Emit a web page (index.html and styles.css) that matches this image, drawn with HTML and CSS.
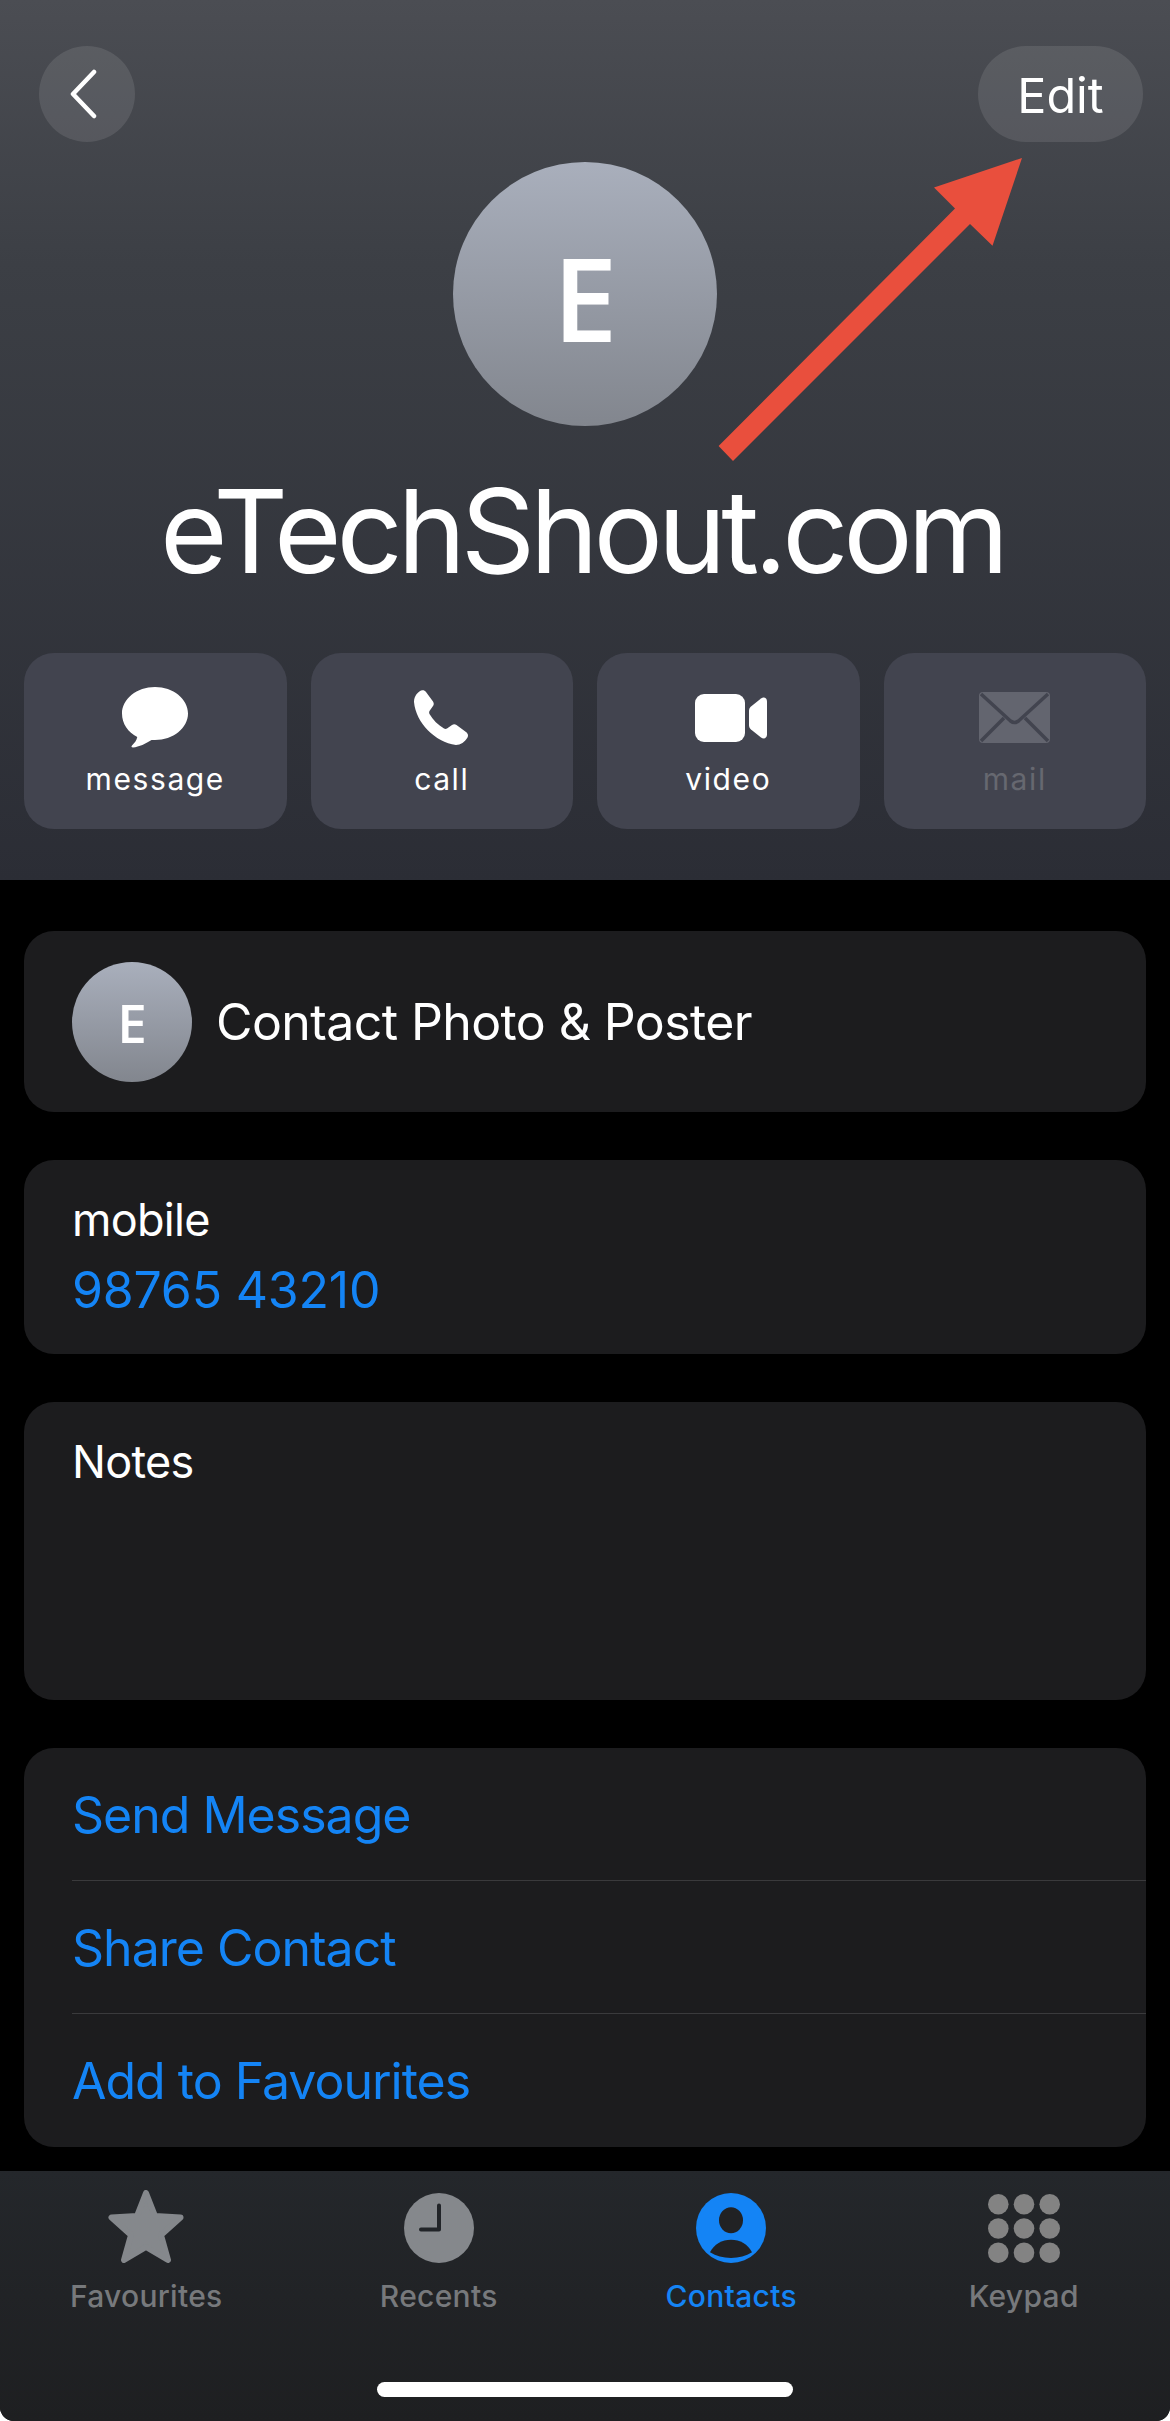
FILE: index.html
```html
<!DOCTYPE html>
<html lang="en">
<head>
<meta charset="utf-8">
<title>eTechShout.com</title>
<link rel="stylesheet" href="styles.css">
</head>
<body>
<div class="phone">
  <header class="hero">
    <div class="nav">
      <button class="round back" aria-label="Back">
        <svg class="chev" viewBox="0 0 30 50"><path d="M25 3 L4 25 L25 47"/></svg>
      </button>
      <button class="round edit">Edit</button>
    </div>
    <div class="avatar">E</div>
    <h1 class="name">eTechShout.com</h1>
    <div class="actions">
      <div class="action">
        <div class="action-icon"><svg class="i-msg" viewBox="0 0 66 61"><path d="M33 0C51.2 0 66 11.9 66 26.5C66 41.1 51.2 53 33 53C31.5 53 30.5 53 29.5 53C24 56.5 17 60 11 60.5C9.5 60.5 9 59.5 10 58.5C12.5 56 14.5 53.5 15.3 50C6 45.5 0 36.5 0 26.5C0 11.9 14.8 0 33 0Z"/></svg></div>
        <span class="action-label">message</span>
      </div>
      <div class="action">
        <div class="action-icon"><svg class="i-call" viewBox="0 0 55 55"><path d="M1 12C1 6 5 1.5 9 .3C10.5 0 12 .5 13 2L20 11.5C21 13 21 14.5 20 16L16.5 21C16 22 16 23 16.5 24C20 30 25 35 31 38.5C32 39 33 39 34 38.5L39 35C40.5 34 42 34 43.5 35L53 42C55 43.5 55.5 45.5 54.5 47.5C52 52 47.5 55 43 55C22 52 3 33 1 12Z"/></svg></div>
        <span class="action-label">call</span>
      </div>
      <div class="action">
        <div class="action-icon"><svg class="i-video" viewBox="0 0 72 48"><rect width="50" height="48" rx="9"/><path d="M54 17C54 15 54.5 14 56 12.5L66 4.5C69 2.5 72 4 72 7.5V40.500C72 44 69 45.500 66 43.500L56 35.500C54.500 34 54 33 54 31Z"/></svg></div>
        <span class="action-label">video</span>
      </div>
      <div class="action dim">
        <div class="action-icon"><svg class="i-mail" viewBox="0 0 71 51"><rect width="71" height="51" rx="4"/><path d="M2 2 L31.500 29Q35.500 32 39.500 29L69 2M2 49L25 26M69 49L46 26"/></svg></div>
        <span class="action-label">mail</span>
      </div>
    </div>
    <svg class="arrow" viewBox="0 0 1170 880"><polygon points="1022,158 934,187.500 955,208.600 718.600,446 733,461 970,224 992.500,245.700"/></svg>
  </header>

  <main class="list">
    <section class="card photo-card">
      <div class="avatar-small">E</div>
      <span class="text">Contact Photo &amp; Poster</span>
    </section>
    <section class="card phone-card">
      <div class="label">mobile</div>
      <div class="text link number">98765 43210</div>
    </section>
    <section class="card notes-card">
      <div class="label">Notes</div>
    </section>
    <section class="card links-card">
      <div class="row link">Send Message</div>
      <div class="row link">Share Contact</div>
      <div class="row link">Add to Favourites</div>
    </section>
  </main>

  <footer class="tabbar">
    <nav class="tabs">
      <div class="tab">
        <div class="tab-icon"><svg class="i-star" viewBox="0 0 76 73"><polygon points="38,3 47,26 72.500,27.500 53,45 60,70 38,57 16,70 23,45 3.500,27.500 29,26"/></svg></div>
        <span class="tab-label">Favourites</span>
      </div>
      <div class="tab">
        <div class="tab-icon"><svg class="i-clock" viewBox="0 0 70 70"><circle cx="35" cy="35" r="35"/><path d="M35 12.500V36.500H17"/></svg></div>
        <span class="tab-label">Recents</span>
      </div>
      <div class="tab active">
        <div class="tab-icon"><svg class="i-person" viewBox="0 0 70 70"><circle class="disc" cx="35" cy="35" r="35"/><ellipse cx="35" cy="27.300" rx="12" ry="13"/><path d="M14 59.300C18 51 26 46.700 35 46.700C44 46.700 52 51 56 59.300C50 63 43 65 35 65C27 65 20 63 14 59.300Z"/></svg></div>
        <span class="tab-label">Contacts</span>
      </div>
      <div class="tab">
        <div class="tab-icon"><svg class="i-keypad" viewBox="0 0 72 69">
          <circle cx="10.300" cy="10.300" r="10.300"/><circle cx="36" cy="10.300" r="10.300"/><circle cx="61.700" cy="10.300" r="10.300"/>
          <circle cx="10.300" cy="34.500" r="10.300"/><circle cx="36" cy="34.500" r="10.300"/><circle cx="61.700" cy="34.500" r="10.300"/>
          <circle cx="10.300" cy="58.700" r="10.300"/><circle cx="36" cy="58.700" r="10.300"/><circle cx="61.700" cy="58.700" r="10.300"/>
        </svg></div>
        <span class="tab-label">Keypad</span>
      </div>
    </nav>
    <div class="home-bar"></div>
  </footer>
</div>
</body>
</html>
```

FILE: styles.css
```css
* { box-sizing: border-box; }
html, body { margin: 0; padding: 0; background: #fff; }
body { font-family: Inter, "Noto Sans", sans-serif; color: #fff; }

.phone {
  width: 1170px;
  height: 2421px;
  background: #000;
  display: flex;
  flex-direction: column;
  overflow: hidden;
  border-radius: 0 0 14px 14px;
}

/* Hero */
.hero {
  position: relative;
  height: 880px;
  flex: none;
  display: flex;
  flex-direction: column;
  align-items: center;
  background: linear-gradient(180deg, #4b4d53 0%, #3c3f45 30%, #2b2d35 100%);
}
.nav {
  width: 100%;
  padding: 46px 27px 0 39px;
  display: flex;
  justify-content: space-between;
}
.round {
  height: 96px;
  border: 0;
  border-radius: 48px;
  background: rgba(255, 255, 255, .1);
  color: #fff;
  font-family: inherit;
  display: flex;
  align-items: center;
  justify-content: center;
  padding: 0;
}
.back { width: 96px; }
.edit { width: 165px; padding-top: 2px; font-size: 48.5px; font-weight: 400; }
.chev { width: 30px; height: 50px; margin-left: -6px; fill: none; stroke: #fff; stroke-width: 4.5; stroke-linecap: round; stroke-linejoin: round; }

.avatar {
  width: 264px;
  height: 264px;
  margin-top: 20px;
  padding-top: 6px;
  border-radius: 50%;
  background: linear-gradient(180deg, #a9afbc, #82868e);
  display: flex;
  align-items: center;
  justify-content: center;
  font-family: "Open Sans", Inter, sans-serif;
  font-size: 116px;
  font-weight: 600;
}
.name {
  margin: 45px 0 0 -6px;
  font-size: 116px;
  line-height: 120px;
  font-weight: 400;
  letter-spacing: -5.2px;
  white-space: nowrap;
}
.actions {
  width: 100%;
  margin-top: 62px;
  padding: 0 24px;
  display: grid;
  grid-template-columns: repeat(4, 1fr);
  gap: 24px;
}
.action {
  height: 176px;
  padding-top: 34px;
  border-radius: 30px;
  background: #42444f;
  display: flex;
  flex-direction: column;
  align-items: center;
}
.action-icon { height: 61px; display: flex; align-items: center; justify-content: center; fill: #fff; }
.action-label { margin-top: 13px; font-size: 30px; line-height: 36px; letter-spacing: 1.6px; }
.dim .action-label { color: #666870; }
.i-msg { width: 66px; height: 61px; }
.i-call { width: 55px; height: 55px; margin-left: -2px; }
.i-video { width: 72px; height: 48px; margin-left: 5px; }
.i-mail { width: 71px; height: 51px; fill: #63656f; }
.i-mail path { fill: none; stroke: #42444f; stroke-width: 3.5; }
.arrow { position: absolute; left: 0; top: 0; width: 1170px; height: 880px; fill: #e94f3d; pointer-events: none; }

/* Cards */
.list {
  flex: none;
  padding: 51px 24px 24px;
  display: flex;
  flex-direction: column;
  gap: 48px;
}
.card { background: #1c1c1e; border-radius: 30px; }
.text, .row { font-size: 50px; line-height: 60px; letter-spacing: -.6px; }
.label { font-size: 45px; line-height: 60px; letter-spacing: -.7px; }
.link { color: #1484f5; }
.photo-card { height: 181px; padding: 0 48px; display: flex; align-items: center; gap: 24px; }
.avatar-small {
  width: 120px;
  height: 120px;
  padding-top: 2px;
  border-radius: 50%;
  background: linear-gradient(180deg, #a9afbc, #82868e);
  display: flex;
  align-items: center;
  justify-content: center;
  font-family: "Open Sans", Inter, sans-serif;
  font-size: 53px;
  font-weight: 600;
}
.phone-card { height: 194px; padding: 30px 48px 0; }
.number { margin-top: 10px; letter-spacing: -.2px; }
.notes-card { height: 298px; padding: 30px 48px 0; }
.links-card { height: 399px; padding-left: 48px; }
.row { height: 133px; padding-top: 1px; letter-spacing: -1px; display: flex; align-items: center; border-bottom: 1px solid #3a3a3c; }
.row:last-child { border-bottom: 0; }

/* Tab bar */
.tabbar {
  flex: 1;
  padding-top: 18px;
  display: flex;
  flex-direction: column;
  align-items: center;
  background: linear-gradient(180deg, #24272b, #1e1f21);
}
.tabs { width: 100%; display: grid; grid-template-columns: repeat(4, 1fr); }
.tab { display: flex; flex-direction: column; align-items: center; color: #77797c; }
.tab-icon { height: 74px; display: flex; align-items: flex-end; justify-content: center; }
.tab-label { margin-top: 15px; font-size: 30px; line-height: 36px; font-weight: 500; letter-spacing: .3px; }
.active { color: #1484f5; }
.i-star { width: 76px; height: 73px; fill: #85888c; stroke: #85888c; stroke-width: 6; stroke-linejoin: round; }
.i-clock { width: 70px; height: 70px; fill: #85888c; }
.i-clock path { fill: none; stroke: #212428; stroke-width: 4; stroke-linecap: round; stroke-linejoin: round; }
.i-person { width: 70px; height: 70px; fill: #212224; }
.i-person .disc { fill: #1484f5; }
.i-keypad { width: 72px; height: 69px; fill: #838383; }
.home-bar { width: 416px; height: 15px; margin-top: auto; margin-bottom: 24px; border-radius: 8px; background: #fff; }
```
